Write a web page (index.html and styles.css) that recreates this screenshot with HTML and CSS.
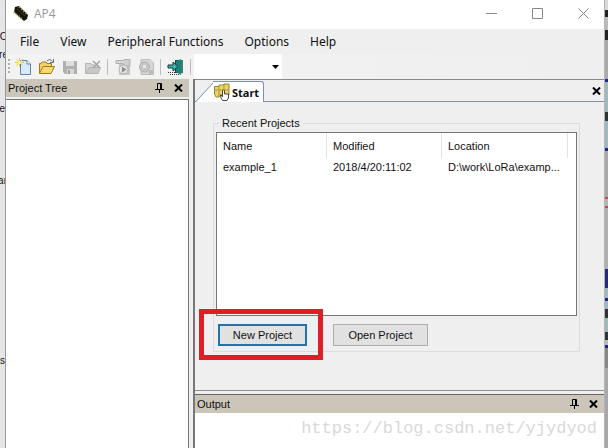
FILE: index.html
```html
<!DOCTYPE html>
<html lang="en">
<head>
    <meta charset="UTF-8">
    <meta name="viewport" content="width=device-width, initial-scale=1.0">
    <title>AP4</title>
    <link rel="stylesheet" href="styles.css">
</head>
<body>

    <div class="behind behind-left">
        <span class="scrap scrap-1">C</span>
        <span class="scrap scrap-2">re</span>
        <span class="scrap scrap-3">e</span>
        <span class="scrap scrap-4">ar</span>
        <span class="scrap scrap-5">s</span>
    </div>

    <div class="window">
        <header class="title-bar">
            <svg class="app-icon" width="18" height="16" viewBox="0 0 18 16">
                <path d="M3 1L7 0L16 9L15 13L12 15L2 6Z" fill="#15150f"/>
                <path d="M7 1L16 9M2 6L11 14" stroke="#b8ab35" stroke-width="2" stroke-dasharray="1 2" fill="none"/>
                <path d="M5 3L13 10" stroke="#3a3a32"/>
            </svg>
            <h1>AP4</h1>
            <button class="win-btn" aria-label="Minimize"><svg width="11" height="11"><path d="M0 5.500H11" stroke="#888"/></svg></button>
            <button class="win-btn" aria-label="Maximize"><svg width="11" height="11"><path d="M.5 .5H10.500V10.500H.5Z" fill="none" stroke="#888"/></svg></button>
            <button class="win-btn" aria-label="Close"><svg width="11" height="11"><path d="M.5 .5L10.500 10.500M10.500 .5L.5 10.500" stroke="#888"/></svg></button>
        </header>

        <nav class="menu-bar">
            <button>File</button>
            <button>View</button>
            <button>Peripheral Functions</button>
            <button>Options</button>
            <button>Help</button>
        </nav>

        <div class="tool-bar">
            <span class="grip"></span>
            <button aria-label="New">
                <svg width="18" height="18" viewBox="0 0 18 18">
                    <path d="M5.500 2.500H12L15.500 6V16.500H5.500Z" fill="#d9e8fb" stroke="#5f7fb5"/>
                    <path d="M12 2.500V6H15.500" fill="#fff" stroke="#5f7fb5"/>
                    <path d="M4.500 0V9M0 4.500H9M1.500 1.500L7.500 7.500M7.500 1.500L1.500 7.500" stroke="#e6c742"/>
                    <circle cx="4.500" cy="4.500" r="1.500" fill="#fff6b8"/>
                </svg>
            </button>
            <button aria-label="Open">
                <svg width="18" height="18" viewBox="0 0 18 18">
                    <path d="M1.500 15.500V5.500H3L4 4H8L9 5.500H13.500V8" fill="#f5cf68" stroke="#a57b20"/>
                    <path d="M1.500 15.500L5 8.500H16.500L13 15.500Z" fill="#fbd774" stroke="#a57b20"/>
                    <path d="M9 3Q12 0 14.500 3.500M15.500 1V4.500H12" fill="none" stroke="#5d6f8c"/>
                </svg>
            </button>
            <button aria-label="Save" disabled>
                <svg width="18" height="18" viewBox="0 0 18 18">
                    <path d="M2 3H16V16H4L2 14Z" fill="#b0b0b0"/>
                    <path d="M5 3H13V8H5Z" fill="#dedede"/>
                    <path d="M6 11H13V16H6Z" fill="#d8d8d8"/>
                    <path d="M7 12H9V16H7Z" fill="#a0a0a0"/>
                </svg>
            </button>
            <button aria-label="Close project" disabled>
                <svg width="18" height="18" viewBox="0 0 18 18">
                    <path d="M1.500 15.500V5.500H7L8 7H14V15.500Z" fill="#d4d4d4" stroke="#b5b5b5"/>
                    <path d="M1.500 15.500L5 9.500H16.500L14 15.500Z" fill="#c8c8c8" stroke="#b5b5b5"/>
                    <path d="M9 3L16 10M16 3L9 10" stroke="#a5a5a5" stroke-width="1.500"/>
                </svg>
            </button>
            <span class="divider"></span>
            <button aria-label="Generate code" disabled>
                <svg width="18" height="18" viewBox="0 0 18 18">
                    <path d="M5 6H16V17H5Z" fill="#c6c6c6"/>
                    <path d="M2 2.500H9L11 1.500H16V8H11L9 5.500H2Z" fill="#cfcfcf" stroke="#b0b0b0"/>
                    <path d="M3 4H10" stroke="#eee" stroke-dasharray="1 1"/>
                    <circle cx="9.500" cy="11.500" r="4.500" fill="#e4e4e4" stroke="#b0b0b0"/>
                    <path d="M8 8.500L12.500 11.500L8 14.500Z" fill="#8c8c8c"/>
                </svg>
            </button>
            <button aria-label="Stop" disabled>
                <svg width="18" height="18" viewBox="0 0 18 18">
                    <path d="M4 1.500H13L16.500 5V16.500H4Z" fill="#d6d6d6" stroke="#bdbdbd"/>
                    <circle cx="7.500" cy="9" r="5" fill="#c6c6c6" stroke="#b0b0b0"/>
                    <path d="M6 7H9V10H6Z" fill="#e8e8e8"/>
                    <path d="M12 12H16V16H12Z" fill="#bcbcbc"/>
                </svg>
            </button>
            <span class="divider"></span>
            <button aria-label="Exit">
                <svg width="18" height="18" viewBox="0 0 18 18">
                    <path d="M8 2H16V15H8Z" fill="#1d3c3b"/>
                    <path d="M9 3L14 1V17L9 14Z" fill="#17857b"/>
                    <path d="M15 2V16" stroke="#65b9ae"/>
                    <path d="M1 7H6V4L11 8.500L6 13V10H1Z" fill="#42b5a8" stroke="#123f3d"/>
                    <path d="M1 14.500H9M3 16.500H12" stroke="#333" stroke-dasharray="1 1"/>
                </svg>
            </button>
            <span class="divider"></span>
            <select class="target" aria-label="Target"><option></option></select>
            <svg class="arrow" width="7" height="4"><path d="M0 0H7L3.500 4Z"/></svg>
        </div>

        <main class="docks">
            <section class="dock tree">
                <div class="dock-head">
                    <h2>Project Tree</h2>
                    <button aria-label="Auto hide"><svg width="9" height="10"><path d="M2.500 6V.5H6.500V6M5.500 .5V6M0 6.500H9M4.500 7V10" fill="none" stroke="#000"/></svg></button>
                    <button aria-label="Close"><svg width="9" height="8"><path d="M1 .5L8 7.500M8 .5L1 7.500" stroke="#000" stroke-width="2"/></svg></button>
                </div>
                <div class="tree-body"></div>
            </section>

            <div class="work">
                <section class="pages">
                    <div class="tab-strip">
                        <svg class="slant" width="22" height="22"><path d="M0 22L17 3Q18.500 1.500 21 1.500H22V22Z" fill="#fff"/><path d="M0 21.500L17 3Q18.500 1.500 21 1.500H22" fill="none" stroke="#7e93a5"/></svg>
                        <button class="tab">
                            <svg width="18" height="18" viewBox="0 0 18 18">
                                <path d="M1.500 3.500H6V2H11V1H16V12H6V14H3L1.500 11Z" fill="#ead467" stroke="#9a8432"/>
                                <path d="M1.500 7H6M6 4V12M11 2V9M6 7H16" stroke="#b39b3b"/>
                                <path d="M9.500 14V7.500Q10.500 6.500 11.500 7.500V11H15.500V15L14 17.500H9.500L7 13L8 12Z" fill="#fff" stroke="#444"/>
                            </svg>
                            Start
                        </button>
                        <button class="page-close" aria-label="Close page"><svg width="9" height="8"><path d="M1 .5L8 7.500M8 .5L1 7.500" stroke="#000" stroke-width="2"/></svg></button>
                    </div>
                    <div class="page">
                        <fieldset>
                            <legend>Recent Projects</legend>
                            <div class="list">
                                <table>
                                    <thead>
                                        <tr><th class="col-name">Name</th><th class="col-date">Modified</th><th>Location</th></tr>
                                    </thead>
                                    <tbody>
                                        <tr><td>example_1</td><td>2018/4/20:11:02</td><td>D:\work\LoRa\examp...</td></tr>
                                    </tbody>
                                </table>
                            </div>
                            <div class="actions">
                                <div class="marked"><button class="btn btn-default">New Project</button></div>
                                <button class="btn btn-open">Open Project</button>
                            </div>
                        </fieldset>
                    </div>
                </section>

                <section class="dock output">
                    <div class="dock-head">
                        <h2>Output</h2>
                        <button aria-label="Auto hide"><svg width="9" height="10"><path d="M2.500 6V.5H6.500V6M5.500 .5V6M0 6.500H9M4.500 7V10" fill="none" stroke="#000"/></svg></button>
                        <button aria-label="Close"><svg width="9" height="8"><path d="M1 .5L8 7.500M8 .5L1 7.500" stroke="#000" stroke-width="2"/></svg></button>
                    </div>
                    <p class="watermark">https://blog.csdn.net/yjydyod</p>
                </section>
            </div>
        </main>
    </div>

    <div class="behind behind-right"></div>

</body>
</html>
```

FILE: styles.css
```css
* { box-sizing: border-box; }
body { margin: 0; height: 100vh; display: flex; overflow: hidden; background: #e4e4e6; color: #111; font-family: "Liberation Sans", Arial, sans-serif; font-size: 12px; }
h1, h2, p { margin: 0; font-weight: normal; }
button { margin: 0; padding: 0; border: none; background: none; color: inherit; font: inherit; }
svg { display: block; flex: none; }

/* what shows past the window edges */
.behind { position: relative; flex: none; }
.behind-left { width: 5px; background: #e6e6e8; }
.behind-right { width: 3px; background: linear-gradient(#d8d8da 0 10px, #222 10px 17px, #bbb 17px 30px, #222 30px 40px, #aaa 40px 79px, #22228a 79px 82px, #9fb9bd 82px 112px, #333 112px 121px, #9fb9bd 121px 148px, #22228a 148px 151px, #aaa 151px 197px, #c04a55 197px 199px, #b5b5b5 199px 206px, #c04a55 206px 208px, #b0b0b2 208px 269px, #2a2a7a 269px 288px, #9fb9bd 288px 298px, #22228a 298px 301px, #9fb9bd 301px 309px, #333 309px 318px, #9fb9bd 318px 332px, #333 332px 340px, #bbb 340px 345px, #22228a 345px 348px, #888 348px 368px, #a8a8aa 368px); }
.scrap { position: absolute; right: 0; font-size: 10px; line-height: 12px; }
.scrap-1 { top: 31px; right: -2px; }
.scrap-2 { top: 49px; right: -3px; }
.scrap-3 { top: 103px; }
.scrap-4 { top: 175px; right: -2px; }
.scrap-5 { top: 355px; }

.window { position: relative; flex: 1; min-width: 0; display: flex; flex-direction: column; background: #efefef; border-left: 1px solid #999; border-right: 1px solid #b4b4b4; }

.title-bar { display: flex; align-items: center; height: 29px; padding-left: 6px; padding-bottom: 2px; background: #fff; }
.title-bar h1 { flex: 1; padding-left: 4px; color: #999; font-family: "Open Sans", sans-serif; font-size: 12px; }
.win-btn { display: flex; justify-content: center; width: 46px; }
.win-btn:last-child { margin-right: -2px; }

.menu-bar { display: flex; gap: 21px; height: 25px; padding-left: 14px; font-family: "Noto Sans", sans-serif; font-size: 12px; }

.tool-bar { display: flex; align-items: center; height: 25px; background: #f3f3f3 linear-gradient(90deg, #f3f3f3, #efefef); }
.tool-bar button { width: 23px; display: flex; justify-content: center; }
.grip { width: 2px; height: 15px; margin: 0 2px; background: repeating-linear-gradient(#b0b0b0 0 2px, transparent 2px 4px); }
.divider { width: 1px; height: 16px; margin: 0 3px; background: #bbb; }
.target { appearance: none; width: 88px; height: 25px; border: none; border-radius: 0; background: #fff; font-size: 12px; }
.arrow { margin-left: -10px; }

.docks { flex: 1; min-height: 0; display: flex; gap: 4px; }
.dock { display: flex; flex-direction: column; }
.dock-head { display: flex; align-items: center; gap: 10px; height: 18px; padding: 0 6px 0 2px; background: #cbc5ba; }
.dock-head h2 { flex: 1; font-size: 11px; }
.tree { width: 183px; }
.tree-body { flex: 1; margin-top: 2px; background: #fff; border: 1px solid #777; border-bottom: none; border-left: none; }

.work { flex: 1; min-width: 0; display: flex; flex-direction: column; border-left: 2px solid #777; }
.pages { flex: 1; min-height: 0; display: flex; flex-direction: column; border-top: 1px solid #888; border-bottom: 1px solid #8c9197; }
.tab-strip { display: flex; height: 22px; background: linear-gradient(#7e93a5, #7e93a5) bottom / 100% 1px no-repeat; }
.tab { display: flex; align-items: center; gap: 1px; height: 21px; margin: 1px 0 0 -5px; padding-right: 4px; background: #fff; border-right: 1px solid #7e93a5; border-top: 1px solid #7e93a5; border-top-right-radius: 3px; font-family: "Noto Sans", sans-serif; font-size: 11px; font-weight: bold; }
.slant { margin-left: 1px; }
.page-close { margin-left: auto; padding-right: 3px; }
.page { flex: 1; min-height: 0; padding: 14px 24px 38px 18px; font-size: 11px; }

fieldset { display: flex; flex-direction: column; height: 100%; min-width: 0; margin: 0; padding: 0 2px 5px; border: 1px solid #dcdcdc; }
legend { height: 14px; margin-left: 3px; padding: 0 3px; line-height: 14px; }
.list { height: 184px; margin-top: 2px; background: #fff; border: 1px solid #777; }
table { width: 100%; table-layout: fixed; border-spacing: 0; }
th, td { height: 17px; padding: 0 0 0 6px; text-align: left; font-weight: normal; white-space: nowrap; }
thead tr { background: linear-gradient(#e2e2e2, #e2e2e2) right 8px top / 1px 100% no-repeat; }
th { height: 25px; border-right: 1px solid #e2e2e2; }
th:last-child { border-right: none; }
.col-name { width: 110px; }
.col-date { width: 115px; }

.actions { display: flex; gap: 26px; margin-top: 8px; padding-left: 2px; }
.marked { position: relative; }
.marked::after { content: ""; position: absolute; inset: -15px -16px -14px -19px; border: 5px solid #dc2029; pointer-events: none; }
.btn { width: 95px; height: 22px; background: #e1e1e1; border: 1px solid #adadad; }
.btn-default { width: 89px; border: 2px solid #2472ad; }

.output { flex: none; height: 54px; margin-top: 3px; background: #fff; border-top: 1px solid #666; }
.watermark { padding: 6px 7px 0 0; color: #d9d9d9; font-family: "Liberation Mono", monospace; font-size: 17px; line-height: 20px; text-align: right; }
```
